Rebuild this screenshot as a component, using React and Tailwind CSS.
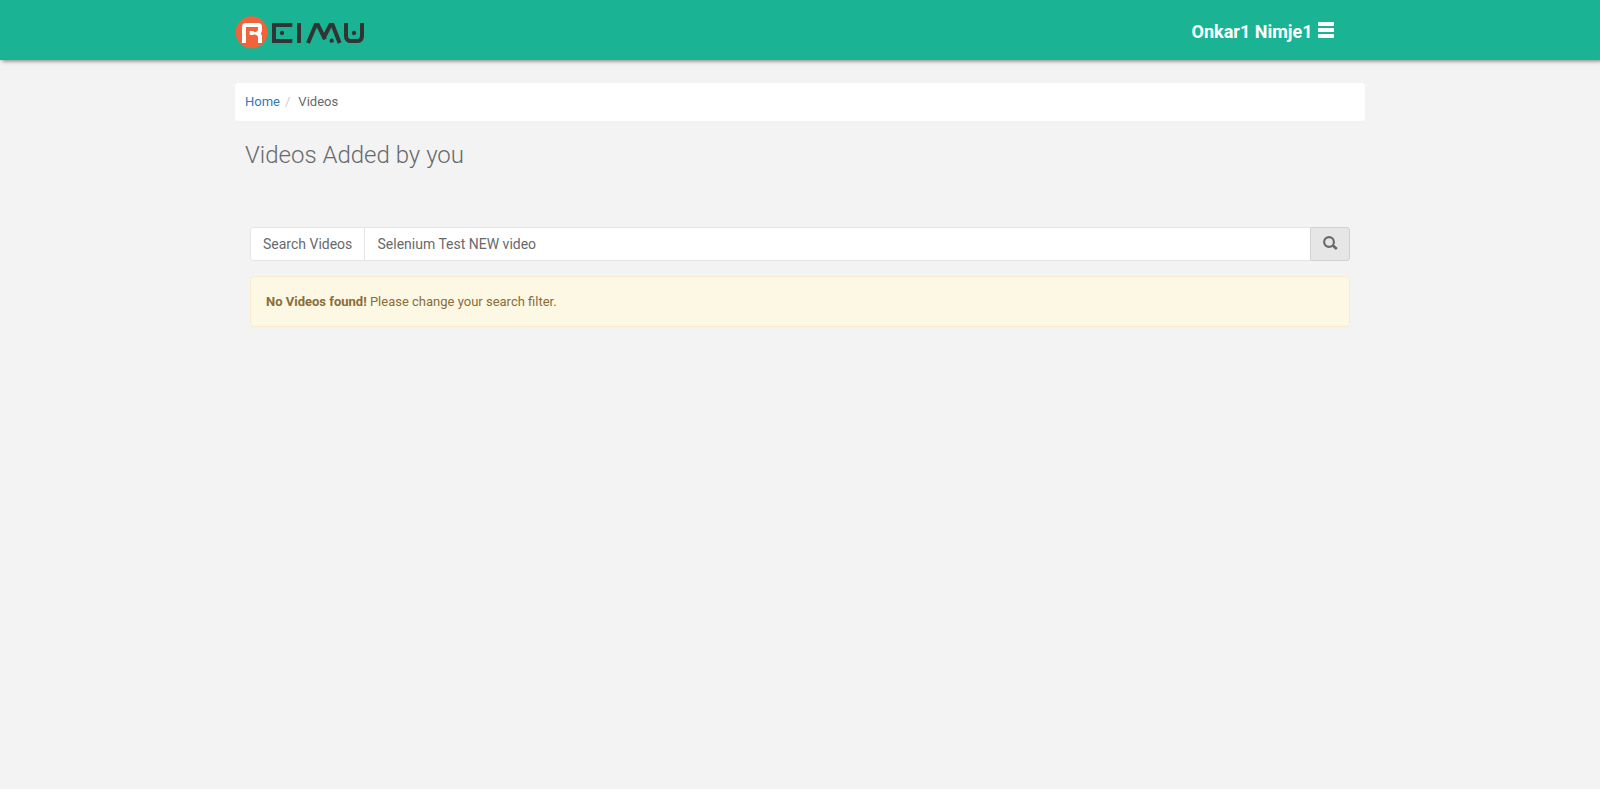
function Logo() {
  return (
    <svg className="block h-[34px] w-[132px]" viewBox="15 21 396 102" fill="none" aria-label="Reimu">
      <circle cx="65" cy="73" r="48" fill="#f1633a" />
      <path d="M42 105V57q0-6 6-6h36q6 0 6 6v9q0 7-8 10q8 3 8 11v18" stroke="#fff" strokeWidth="12" />
      <path d="M59 69h11l5 6-5 6H59z" fill="#fff" />
      <g stroke="#333" strokeWidth="12">
        <path d="M187 51H132V99H187" />
        <path d="M207 45V105" />
        <path d="M234 105L257 51H264L285 94M282 88L301 51H308L329 105" strokeWidth="12" />
        <path d="M348 45V83Q348 99 364 99H380Q396 99 396 83V45" />
      </g>
      <g fill="#333">
        <circle cx="156" cy="75" r="6.500" />
        <circle cx="305" cy="98" r="6.500" />
        <circle cx="372" cy="75" r="6.500" />
      </g>
    </svg>
  );
}

function MenuIcon() {
  return (
    <svg className="mt-[-4px] ml-[5.500px] h-4 w-4" viewBox="0 0 16 16" fill="#fff">
      <rect y="0" width="16" height="4" rx="0.8" />
      <rect y="6" width="16" height="4" rx="0.8" />
      <rect y="12" width="16" height="4" rx="0.8" />
    </svg>
  );
}

function SearchIcon() {
  return (
    <svg className="mt-[-2px] h-[14px] w-[15px]" viewBox="0 0 15 14" fill="none" stroke="#676a6c">
      <circle cx="6" cy="6" r="4.900" strokeWidth="2.100" />
      <path d="M9.600 9.200L13.800 13" strokeWidth="2.700" />
    </svg>
  );
}

export default function App() {
  return (
    <div className="min-h-screen bg-[#f3f3f3] font-[Roboto,sans-serif] text-[13px] text-[#676a6c]">
      <header className="h-[60px] bg-[#1ab394] shadow-[2px_1px_4px_rgba(0,0,0,0.5)]">
        <div className="mx-auto flex h-full w-[1130px] items-center justify-between">
          <div className="pt-1">
            <Logo />
          </div>
          <button className="mr-[31px] flex items-center pt-[3px] text-[18px] font-bold text-white">
            Onkar1 Nimje1
            <MenuIcon />
          </button>
        </div>
      </header>
      <main className="mx-auto w-[1130px] pt-[23px]">
        <nav className="flex h-[38px] items-center rounded bg-white px-[10px]">
          <a href="#" className="text-[#337ab7]">Home</a>
          <span className="pr-[8px] pl-[5px] text-[#ccc]">/</span>
          <span>Videos</span>
        </nav>
        <h2 className="mt-[21px] pl-[10px] text-[24px] leading-[26px] font-light">Videos Added by you</h2>
        <section className="mt-[59px] px-[15px]">
          <form className="flex h-[34px] text-[14px]">
            <label htmlFor="q" className="flex w-[115px] items-center rounded-l-[3px] border border-[#e5e6e7] bg-white pl-3">
              Search Videos
            </label>
            <input
              id="q"
              defaultValue="Selenium Test NEW video"
              className="min-w-0 flex-1 border-y border-[#e5e6e7] bg-white px-[12.500px] outline-none"
            />
            <button type="button" className="flex w-[40px] items-center justify-center rounded-r-[3px] border border-[#d2d2d2] bg-[#e6e6e6]">
              <SearchIcon />
            </button>
          </form>
          <div className="mt-[15px] flex h-[51px] items-center rounded border border-[#faebcc] bg-[#fcf8e3] px-[15px] text-[#8a6d3b]">
            <p>
              <strong className="font-bold">No Videos found!</strong> Please change your search filter.
            </p>
          </div>
        </section>
      </main>
    </div>
  );
}
